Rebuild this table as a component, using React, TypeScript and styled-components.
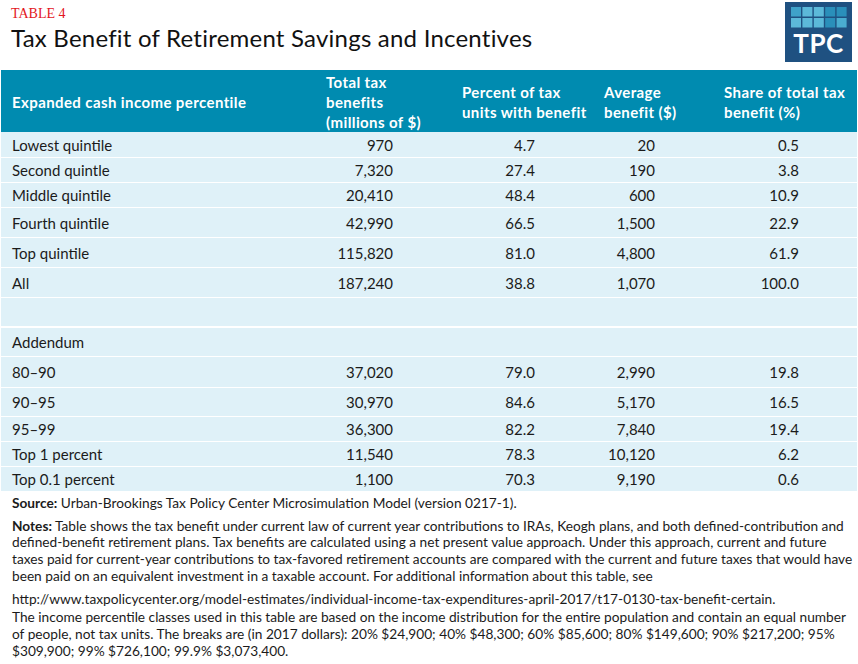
import React from "react";
import styled, { createGlobalStyle } from "styled-components";

const GlobalStyle = createGlobalStyle`
  body {
    margin: 0;
    background: #fff;
    font-family: Lato, "Liberation Sans", sans-serif;
    color: #1b1b1b;
  }
`;

const Page = styled.div`
  width: 858px;
  padding: 0 1px;
  box-sizing: border-box;
`;

const TitleBar = styled.header`
  height: 70px;
  display: flex;
  justify-content: space-between;
  padding-left: 10px;
  padding-right: 5px;
`;

const TitleBlock = styled.div`
  display: flex;
  flex-direction: column;
  padding-top: 5px;
`;

const TableLabel = styled.div`
  font-family: "Liberation Serif", serif;
  font-size: 14px;
  line-height: 18px;
  color: #e3161d;
`;

const Title = styled.h1`
  margin: 0;
  font-weight: 400;
  font-size: 24px;
  letter-spacing: 0.22px;
  line-height: 30px;
  color: #111;
`;

const Logo = styled.svg`
  margin-top: 2px;
`;

const Table = styled.div`
  display: flex;
  flex-direction: column;
  gap: 1px;
`;

const cols = "314px 136px 142px 120px 1fr";

const HeadRow = styled.div`
  display: grid;
  grid-template-columns: ${cols};
  height: 62px;
  background: #008bb0;
  color: #fff;
  font-weight: 700;
  font-size: 15px;
  letter-spacing: 0.4px;
  line-height: 20px;
  margin-bottom: -1px;
`;

const HeadCell = styled.div`
  display: flex;
  align-items: center;
  padding-left: 11px;
  padding-top: 2px;
  white-space: nowrap;
`;

const Row = styled.div<{ $h: number; $gap?: number }>`
  display: grid;
  grid-template-columns: ${cols};
  height: ${(p) => p.$h}px;
  margin-top: ${(p) => p.$gap ?? 0}px;
  background: #dff1f8;
  font-size: 15px;
  align-items: center;
`;

const Label = styled.div`
  padding-left: 11px;
`;

const Num = styled.div`
  text-align: right;
  padding-right: 58px;
`;

const Footer = styled.footer`
  padding: 4px 11px 0;
  font-size: 13.7px;
  line-height: 16.7px;
  color: #1b1b1b;
`;

const Para = styled.p<{ $top: number }>`
  margin: ${(p) => p.$top}px 0 0;
`;

const Line = styled.span`
  display: block;
  white-space: nowrap;
`;

type RowData = { label: string; v: string[]; h: number; gap?: number };

const rows: RowData[] = [
  { label: "Lowest quintile", v: ["970", "4.7", "20", "0.5"], h: 25 },
  { label: "Second quintle", v: ["7,320", "27.4", "190", "3.8"], h: 24 },
  { label: "Middle quintile", v: ["20,410", "48.4", "600", "10.9"], h: 24 },
  { label: "Fourth quintile", v: ["42,990", "66.5", "1,500", "22.9"], h: 29 },
  { label: "Top quintile", v: ["115,820", "81.0", "4,800", "61.9"], h: 29 },
  { label: "All", v: ["187,240", "38.8", "1,070", "100.0"], h: 29 },
  { label: "", v: ["", "", "", ""], h: 28 },
  { label: "Addendum", v: ["", "", "", ""], h: 28, gap: 1 },
  { label: "80–90", v: ["37,020", "79.0", "2,990", "19.8"], h: 30 },
  { label: "90–95", v: ["30,970", "84.6", "5,170", "16.5"], h: 28 },
  { label: "95–99", v: ["36,300", "82.2", "7,840", "19.4"], h: 24 },
  { label: "Top 1 percent", v: ["11,540", "78.3", "10,120", "6.2"], h: 24 },
  { label: "Top 0.1 percent", v: ["1,100", "70.3", "9,190", "0.6"], h: 24 },
];

const squares = [
  ["#3fa2c9", "#5cb9d9", "#5cb9d9", "#2a8fba", "#2a8fba"],
  ["#5cb9d9", "#5cb9d9", "#5cb9d9", "#2a8fba", "#4aadd0"],
];

const TpcLogo = () => (
  <Logo width="67" height="60" viewBox="0 0 67 60">
    <rect width="67" height="60" fill="#1f5181" />
    {squares.map((r, ri) =>
      r.map((c, ci) => (
        <rect key={`${ri}-${ci}`} x={6 + ci * 11.4} y={5 + ri * 11} width="10" height="9.5" fill={c} />
      ))
    )}
    <text
      x="33.5"
      y="50.5"
      textAnchor="middle"
      fill="#fff"
      fontFamily="Lato, 'Liberation Sans', sans-serif"
      fontWeight="700"
      fontSize="26"
      letterSpacing="0.5"
    >
      TPC
    </text>
  </Logo>
);

export default function App() {
  return (
    <Page>
      <GlobalStyle />
      <TitleBar>
        <TitleBlock>
          <TableLabel>TABLE 4</TableLabel>
          <Title>Tax Benefit of Retirement Savings and Incentives</Title>
        </TitleBlock>
        <TpcLogo />
      </TitleBar>
      <Table>
        <HeadRow>
          <HeadCell>Expanded cash income percentile</HeadCell>
          <HeadCell>
            Total tax
            <br />
            benefits
            <br />
            (millions of $)
          </HeadCell>
          <HeadCell>
            Percent of tax
            <br />
            units with benefit
          </HeadCell>
          <HeadCell>
            Average
            <br />
            benefit ($)
          </HeadCell>
          <HeadCell>
            Share of total tax
            <br />
            benefit (%)
          </HeadCell>
        </HeadRow>
        {rows.map((r, i) => (
          <Row key={i} $h={r.h} $gap={r.gap}>
            <Label>{r.label}</Label>
            {r.v.map((v, j) => (
              <Num key={j}>{v}</Num>
            ))}
          </Row>
        ))}
      </Table>
      <Footer>
        <Para $top={0}>
          <b>Source:</b> Urban-Brookings Tax Policy Center Microsimulation Model (version 0217-1).
        </Para>
        <Para $top={6}>
          <Line>
            <b>Notes:</b> Table shows the tax benefit under current law of current year contributions to IRAs, Keogh plans, and both defined-contribution and
          </Line>
          <Line>
            defined-benefit retirement plans. Tax benefits are calculated using a net present value approach. Under this approach, current and future
          </Line>
          <Line>
            taxes paid for current-year contributions to tax-favored retirement accounts are compared with the current and future taxes that would have
          </Line>
          <Line>
            been paid on an equivalent investment in a taxable account. For additional information about this table, see
          </Line>
        </Para>
        <Para $top={6}>
          http://www.taxpolicycenter.org/model-estimates/individual-income-tax-expenditures-april-2017/t17-0130-tax-benefit-certain.
        </Para>
        <Para $top={2}>
          <Line>
            The income percentile classes used in this table are based on the income distribution for the entire population and contain an equal number
          </Line>
          <Line>
            of people, not tax units. The breaks are (in 2017 dollars): 20% $24,900; 40% $48,300; 60% $85,600; 80% $149,600; 90% $217,200; 95%
          </Line>
          <Line>$309,900; 99% $726,100; 99.9% $3,073,400.</Line>
        </Para>
      </Footer>
    </Page>
  );
}
